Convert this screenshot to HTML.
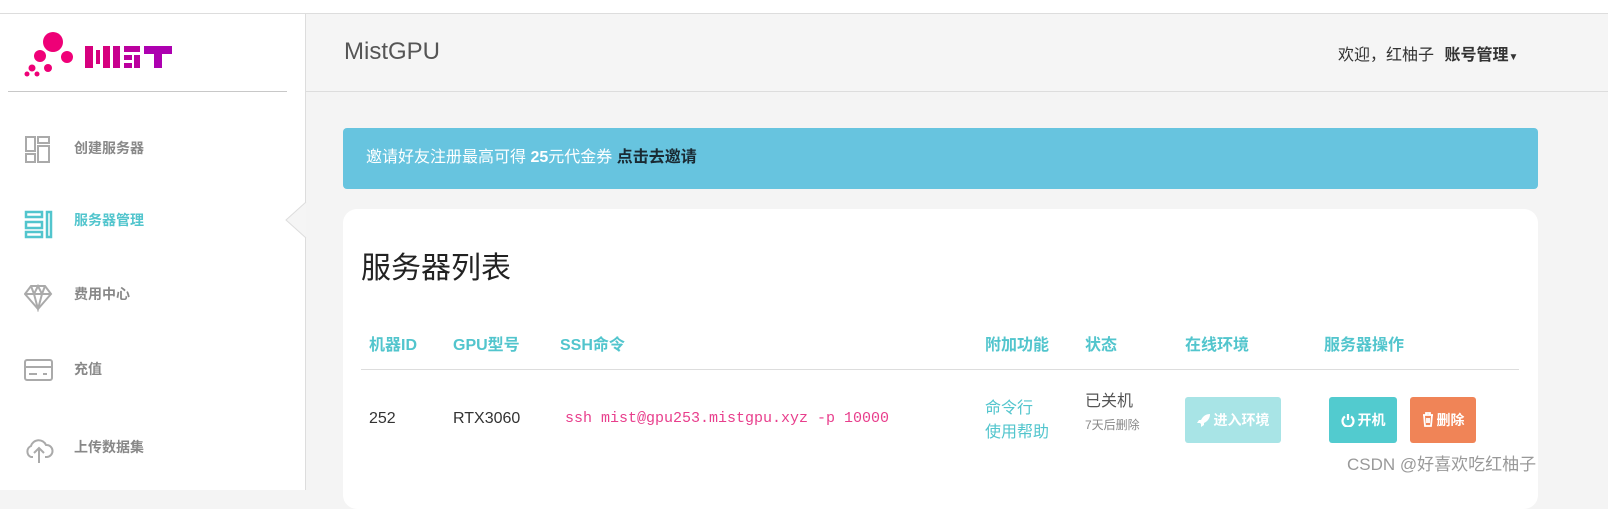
<!DOCTYPE html><html><head><meta charset="utf-8"><style>
*{margin:0;padding:0;box-sizing:border-box}
body{width:1608px;height:490px;overflow:hidden;background:#f4f4f4;font-family:"Liberation Sans","Noto Sans CJK SC",sans-serif;position:relative}
.top{position:absolute;left:0;top:0;width:1608px;height:14px;background:#fff;border-bottom:1px solid #ddd}
.side{position:absolute;left:0;top:14px;width:306px;height:476px;background:#fff;border-right:1px solid #ddd}
.sep{position:absolute;left:8px;top:77px;width:279px;height:1px;background:#c8c8c8}
.item{position:absolute;left:24px;font-size:14px;font-weight:bold;color:#888}
.item span{position:absolute;left:50px;top:0;white-space:nowrap}
.hdr{position:absolute;left:306px;top:14px;width:1302px;height:78px;border-bottom:1px solid #ddd;background:#f5f5f5}
.alert{position:absolute;left:343px;top:128px;width:1195px;height:61px;background:#67c4df;border-radius:4px;color:#fff;font-size:16px;padding-left:23px;line-height:60px}
.card{position:absolute;left:343px;top:209px;width:1195px;height:300px;background:#fff;border-radius:14px}
.th{position:absolute;top:331px;font-size:16px;font-weight:bold;color:#52c5cd}
.td{position:absolute;font-size:16px;color:#333}
.btn{position:absolute;top:397px;height:46px;border-radius:3px;color:#fff;font-size:14px;font-weight:bold;line-height:46px;text-align:center}
.btn svg{vertical-align:-2px;margin-right:3px}
</style></head><body>
<div class="top"></div>
<div class="side">
<div class="sep"></div>
<div class="item" style="top:121px"><svg width="28" height="30" fill="none" stroke="#aaa" stroke-width="2"><rect x="2" y="2" width="9" height="14"/><rect x="14" y="2" width="11" height="6"/><rect x="2" y="19" width="9" height="8"/><rect x="14" y="11" width="11" height="16"/></svg><span style="top:3px">创建服务器</span></div>
<div class="item" style="top:196px"><svg width="30" height="30" fill="none" stroke="#52c5cd" stroke-width="2.5"><rect x="2" y="2" width="16" height="5"/><rect x="2" y="12" width="16" height="6"/><rect x="2" y="22" width="16" height="5"/><rect x="23" y="2" width="4" height="25"/></svg><span style="top:0;color:#52c5cd">服务器管理</span></div>
<div class="item" style="top:270px"><svg width="30" height="28" fill="none" stroke="#aaa" stroke-width="2"><path d="M7 2h14l6 8-13 15L1 10z M1 10h26 M7 2l3 8 4-8 4 8 3-8 M10 10l4 15 4-15"/></svg><span style="top:0">费用中心</span></div>
<div class="item" style="top:344px"><svg width="30" height="26" fill="none" stroke="#aaa" stroke-width="2"><rect x="1" y="2" width="27" height="20" rx="2"/><path d="M1 9h27 M5 16h8 M19 16h4"/></svg><span style="top:1px">充值</span></div>
<div class="item" style="top:421px"><svg width="30" height="30" fill="none" stroke="#aaa" stroke-width="2"><path d="M9 22H7a6 6 0 0 1 0-11 8 8 0 0 1 15-1 6 6 0 0 1 1 12h-2 M15 28V13 M10 18l5-5 5 5"/></svg><span style="top:2px">上传数据集</span></div>
<svg style="position:absolute;left:285px;top:188px" width="22" height="36"><path d="M21 0L1 18l20 18" fill="#f5f5f5" stroke="#ddd"/></svg>
</div>
<svg style="position:absolute;left:0;top:0" width="180" height="80">
<circle cx="53" cy="42" r="10" fill="#ee0077"/>
<circle cx="67" cy="57" r="6" fill="#f00078"/>
<circle cx="40" cy="56" r="6" fill="#f00078"/>
<circle cx="48" cy="68" r="4" fill="#ee0077"/>
<circle cx="32" cy="68" r="3.5" fill="#ee0077"/>
<circle cx="27" cy="74" r="2.5" fill="#ee0077"/>
<circle cx="37" cy="74" r="2.5" fill="#ee0077"/>
<g fill="#d6007e">
<rect x="85" y="46" width="8" height="22"/><rect x="96" y="50" width="4" height="14"/><rect x="103" y="46" width="7" height="22"/>
</g>
<g fill="#c8008e"><rect x="113" y="46" width="7" height="22"/></g>
<g fill="#bb009e"><rect x="124" y="46" width="16" height="6"/><rect x="124" y="55" width="8" height="5"/><rect x="134" y="55" width="6" height="13"/><rect x="124" y="63" width="8" height="5"/></g>
<g fill="#ad00b0"><rect x="144" y="46" width="28" height="8"/><rect x="154" y="54" width="8" height="14"/></g>
</svg>
<div class="hdr">
<div style="position:absolute;left:38px;top:24px;font-size:24px;color:#555">MistGPU</div>
<div style="position:absolute;left:1032px;top:27px;font-size:16px;color:#333">欢迎，红柚子 <b style="margin-left:6px">账号管理</b><span style="font-size:10px">▼</span></div>
</div>
<div class="alert">邀请好友注册最高可得 <b>25</b>元代金券 <b style="color:#1a2a33">点击去邀请</b></div>
<div class="card"></div>
<div style="position:absolute;left:361px;top:243px;font-size:30px;color:#222">服务器列表</div>
<div class="th" style="left:369px">机器ID</div><div class="th" style="left:453px">GPU型号</div><div class="th" style="left:560px">SSH命令</div>
<div class="th" style="left:985px">附加功能</div><div class="th" style="left:1085px">状态</div><div class="th" style="left:1185px">在线环境</div><div class="th" style="left:1324px">服务器操作</div>
<div style="position:absolute;left:361px;top:369px;width:1158px;height:1px;background:#ddd"></div>
<div class="td" style="left:369px;top:410px">252</div><div class="td" style="left:453px;top:410px">RTX3060</div>
<div class="td" style="left:565px;top:410px;font-family:'Liberation Mono',monospace;font-size:15px;color:#e83e8c">ssh mist@gpu253.mistgpu.xyz -p 10000</div>
<div class="td" style="left:985px;top:397px;color:#52c5cd;line-height:24px">命令行<br>使用帮助</div>
<div class="td" style="left:1085px;top:387px;color:#555">已关机</div>
<div class="td" style="left:1085px;top:416px;font-size:12px;color:#888">7天后删除</div>
<div class="btn" style="left:1185px;width:96px;background:#a8e4e6"><svg width="14" height="14" viewBox="0 0 14 14"><path d="M13 1C9 1 6 3 4 7L2 7 0 10l3 0 1 1 0 3 3-2 0-2c4-2 6-5 6-9z" fill="#fff"/></svg>进入环境</div>
<div class="btn" style="left:1329px;width:68px;background:#52cbcf"><svg width="14" height="14" fill="none" stroke="#fff" stroke-width="2.2"><path d="M4 3.5a5.5 5.5 0 1 0 6 0 M7 1v6"/></svg>开机</div>
<div class="btn" style="left:1410px;width:66px;background:#f08457"><svg width="12" height="15" fill="none" stroke="#fff" stroke-width="1.8"><path d="M1 3h10 M4 3V1h4v2 M2 3l1 11h6l1-11 M5 6v5 M7 6v5"/></svg>删除</div>
<div style="position:absolute;left:1347px;top:450px;font-size:17px;color:#999">CSDN @好喜欢吃红柚子</div>
</body></html>
